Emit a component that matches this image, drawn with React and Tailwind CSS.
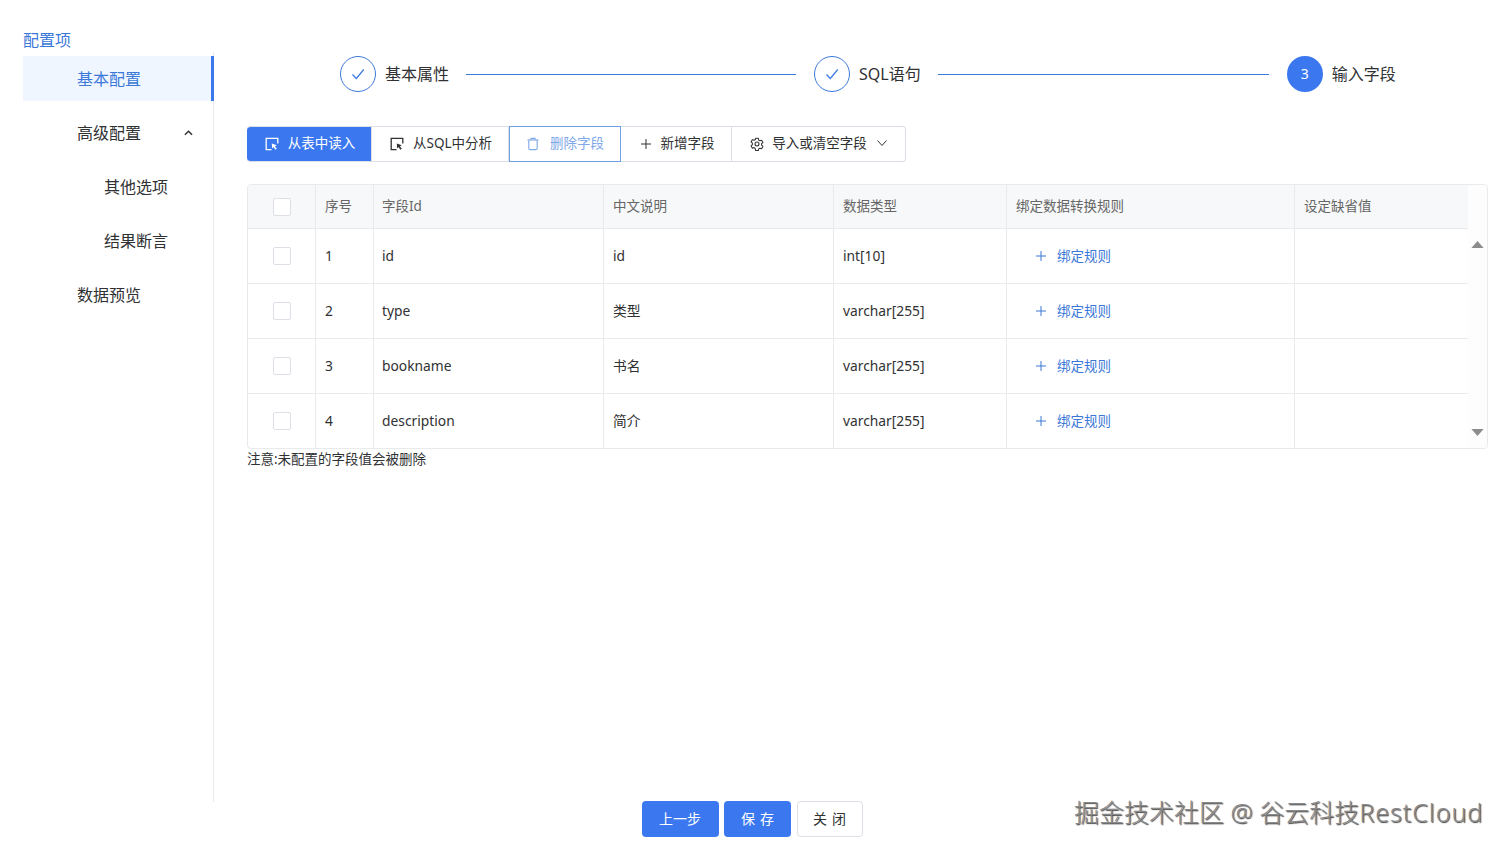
import React from "react";

const SelectIcon = ({ className }) => (
  <svg viewBox="0 0 14 14" width="14" height="14" fill="none" stroke="currentColor" strokeWidth="1.3" className={className}>
    <path d="M6.500 12.600H1.200V1.400H12.800V6.500" />
    <path d="M6.800 6.500L7.100 11.600L8.500 10.100L10.400 12.800L11.800 11.800L9.900 9.200L11.800 8.300Z" fill="currentColor" stroke="none" />
  </svg>
);
const Trash = ({ className }) => (
  <svg viewBox="0 0 14 14" width="14" height="14" fill="none" stroke="currentColor" strokeWidth="1.1" className={className}>
    <path d="M1.500 3H12.500" />
    <path d="M5 3V1.400H9V3" />
    <path d="M2.800 3V11.200Q2.800 12.600 4.200 12.600H9.800Q11.200 12.600 11.200 11.200V3" />
  </svg>
);
const Plus = ({ className }) => (
  <svg viewBox="0 0 12 12" width="12" height="12" fill="none" stroke="currentColor" strokeWidth="1" className={className}>
    <path d="M6 1V11M1 6H11" />
  </svg>
);
const Gear = ({ className }) => (
  <svg viewBox="0 0 24 24" width="14" height="14" fill="none" stroke="currentColor" strokeWidth="1.800" strokeLinejoin="round" className={className}>
    <path d="M9.700 2.300h4.600l.6 3 2.100 1.200 2.900-1 2.300 4-2.300 2v2.600l2.300 2-2.300 4-2.900-1-2.100 1.200-.6 3H9.700l-.6-3L7 18.100l-2.900 1-2.300-4 2.300-2v-2.600l-2.300-2 2.300-4 2.900 1 2.100-1.200z" />
    <circle cx="12" cy="12" r="3.400" />
  </svg>
);
const Check = () => (
  <svg viewBox="0 0 16 16" width="16" height="16" fill="none" stroke="#3b78e7" strokeWidth="1.200">
    <path d="M2.500 8.500L6.300 12.500L13.800 3.500" />
  </svg>
);

const Tool = ({ icon, children, className = "", gap = "gap-[9px] pl-[2px]" }) => (
  <div className={`flex h-9 items-center justify-center ${gap} border-y border-r border-[#dcdfe6] text-[13.5px] ${className}`}>
    {icon}
    <span className="-translate-y-px">{children}</span>
  </div>
);

const Step = ({ label, n, lineClass }) => (
  <>
    {n ? (
      <div className="flex h-9 w-9 shrink-0 items-center justify-center rounded-full bg-[#3b78f0] text-sm text-white">{n}</div>
    ) : (
      <div className="flex h-9 w-9 shrink-0 items-center justify-center rounded-full border border-[#3b78d8]"><Check /></div>
    )}
    <span className="ml-[9px] whitespace-nowrap text-base text-[#303133]">{label}</span>
    {lineClass && <div className={`h-px bg-[#3b78d8] ${lineClass}`} />}
  </>
);

const cols = "grid grid-cols-[68px_58px_230px_230px_173px_288px_174px]";
const rows = [
  ["1", "id", "id", "int[10]"],
  ["2", "type", "类型", "varchar[255]"],
  ["3", "bookname", "书名", "varchar[255]"],
  ["4", "description", "简介", "varchar[255]"],
];
const Box = () => <div className="h-[18px] w-[18px] rounded-[2px] border border-[#dcdfe6] bg-white" />;
const cell = "flex items-center border-r border-[#e8eaec] px-[9px]";

const Tri = ({ down }) => (
  <svg viewBox="0 0 14 8" width="13" height="7" className="text-[#8c8c8c]">
    <path d={down ? "M0 0H14L7 8Z" : "M7 0L14 8H0Z"} fill="currentColor" />
  </svg>
);

export default function App() {
  return (
    <div className="relative h-[850px] w-[1505px] overflow-hidden bg-white text-[#303133] [font-family:'Noto_Sans','Noto_Sans_CJK_SC',sans-serif]">
      <div className="flex h-[802px]">
        <aside className="ml-[23px] mt-[30px] flex w-[191px] shrink-0 flex-col">
          <div className="h-[22px] text-base leading-[21px] text-[#3b78d8]">配置项</div>
          <div className="flex-1 border-r border-[#e8eaec] text-base">
            <div className="-mr-px mb-[10px] mt-[4px] flex h-[45px] items-center border-r-[3px] border-[#3b78f0] bg-[#f0f6ff] pl-[54px] text-[#3b78d8]">基本配置</div>
            <div className="mb-[10px] flex h-[44px] items-center justify-between pl-[54px] pr-[20px]">
              <span>高级配置</span>
              <svg viewBox="0 0 10 6" width="9" height="6" fill="none" stroke="#303133" strokeWidth="1.600"><path d="M1 5L5 1L9 5" /></svg>
            </div>
            <div className="mb-[10px] flex h-[44px] items-center pl-[81px]">其他选项</div>
            <div className="mb-[10px] flex h-[44px] items-center pl-[81px]">结果断言</div>
            <div className="flex h-[44px] items-center pl-[54px]">数据预览</div>
          </div>
        </aside>
        <main className="flex min-w-0 flex-1 flex-col pl-[33px] pr-[17px]">
          <div className="mt-[56px] flex items-center pl-[93px]">
            <Step label="基本属性" lineClass="ml-[17px] mr-[18px] w-[330px]" />
            <Step label="SQL语句" lineClass="ml-[17px] mr-[18px] w-[331px]" />
            <Step label="输入字段" n="3" />
          </div>
          <div className="mt-[34px] flex">
            <Tool className="w-[125px] rounded-l-[4px] border-[#3b78f0] bg-[#3b78f0] text-white" icon={<SelectIcon />}>从表中读入</Tool>
            <Tool className="w-[137px]" icon={<SelectIcon />}>从SQL中分析</Tool>
            <Tool className="w-[112px] border-l !border-[#6f9fe6] text-[#7ea8ea]" gap="gap-[10px]" icon={<Trash />}>删除字段</Tool>
            <Tool className="w-[111px]" icon={<Plus />}>新增字段</Tool>
            <Tool className="w-[174px] rounded-r-[4px]" gap="gap-[8px]" icon={<Gear />}>
              <span className="inline-flex items-center gap-[10px]">导入或清空字段
                <svg viewBox="0 0 10 6" width="10" height="6" fill="none" stroke="#303133" strokeWidth="1"><path d="M.5 .5L5 5.500L9.500 .5" /></svg>
              </span>
            </Tool>
          </div>
          <div className="mt-[22px] flex h-[265px] w-[1241px] overflow-hidden rounded-[4px] border border-[#e8eaec]">
            <div className="w-[1220px] shrink-0">
              <div className={`${cols} h-[44px] border-b border-[#e8eaec] bg-[#f7f8f9] text-[13.5px] text-[#666]`}>
                <div className={`${cell} justify-center pr-[9px]`}><Box /></div>
                <div className={cell}>序号</div>
                <div className={`${cell} pl-[8px]`}>字段Id</div>
                <div className={cell}>中文说明</div>
                <div className={cell}>数据类型</div>
                <div className={cell}>绑定数据转换规则</div>
                <div className={cell}>设定缺省值</div>
              </div>
              {rows.map((r, i) => (
                <div key={r[0]} className={`${cols} text-[13.8px] ${i < 3 ? "h-[55px] border-b border-[#e8eaec]" : "h-[54px]"}`}>
                  <div className={`${cell} justify-center pr-[9px]`}><Box /></div>
                  <div className={cell}>{r[0]}</div>
                  <div className={`${cell} pl-[8px]`}>{r[1]}</div>
                  <div className={cell}>{r[2]}</div>
                  <div className={cell}>{r[3]}</div>
                  <div className={`${cell} gap-[10px] pl-[28px] text-[13.5px] text-[#3b78d8]`}><Plus /><span>绑定规则</span></div>
                  <div className={cell} />
                </div>
              ))}
            </div>
            <div className="flex flex-1 flex-col items-center justify-between bg-[#fdfdfd] pb-[12px] pt-[56px]">
              <Tri />
              <Tri down />
            </div>
          </div>
          <div className="text-[13.5px] leading-[20px]">注意:未配置的字段值会被删除</div>
        </main>
      </div>
      <div className="-mt-px flex justify-center gap-[5px] pr-[1px] text-sm">
        <div className="flex h-9 w-[77px] items-center justify-center rounded-[4px] bg-[#3b78f0] text-white">上一步</div>
        <div className="flex h-9 w-[67px] items-center justify-center rounded-[4px] bg-[#3b78f0] pl-[6px] tracking-[5px] text-white">保存</div>
        <div className="ml-[1px] flex h-9 w-[66px] items-center justify-center rounded-[4px] border border-[#dcdfe6] pl-[5px] tracking-[5px]">关闭</div>
      </div>
      <div className="absolute left-[1074px] top-[795px] whitespace-nowrap text-[25px] font-light leading-[34px] text-[#8a8a8a] [text-shadow:1px_1px_1px_#444,-1px_0_0_#fff]">掘金技术社区 @ 谷云科技<span className="tracking-[1px]">RestCloud</span></div>
    </div>
  );
}
